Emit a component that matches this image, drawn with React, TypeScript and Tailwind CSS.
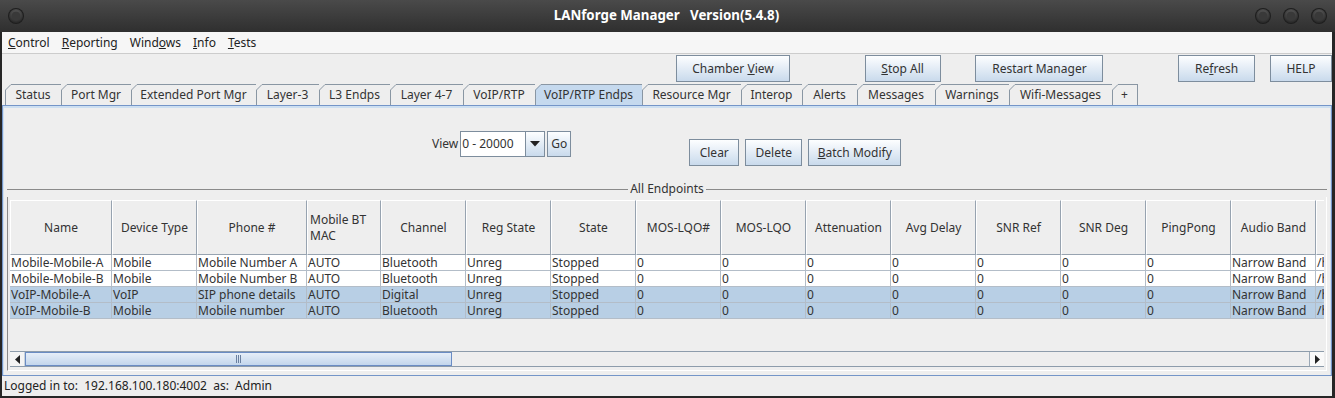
import React from "react";

const tabs = [
  { label: "Status", w: "w-[56px]" },
  { label: "Port Mgr", w: "w-[70px]" },
  { label: "Extended Port Mgr", w: "w-[125px]" },
  { label: "Layer-3", w: "w-[63px]" },
  { label: "L3 Endps", w: "w-[71px]" },
  { label: "Layer 4-7", w: "w-[73px]" },
  { label: "VoIP/RTP", w: "w-[72px]" },
  { label: "VoIP/RTP Endps", w: "w-[107px]", active: true },
  { label: "Resource Mgr", w: "w-[99px]" },
  { label: "Interop", w: "w-[61px]" },
  { label: "Alerts", w: "w-[55px]" },
  { label: "Messages", w: "w-[78px]" },
  { label: "Warnings", w: "w-[74px]" },
  { label: "Wifi-Messages", w: "w-[103px]" },
  { label: "+", w: "w-[26px]", last: true },
];

const columns = [
  { title: "Name", w: "w-[102px]" },
  { title: "Device Type", w: "w-[85px]" },
  { title: "Phone #", w: "w-[110px]" },
  { title: "Mobile BT MAC", w: "w-[74px]", twoLine: true },
  { title: "Channel", w: "w-[85px]" },
  { title: "Reg State", w: "w-[85px]" },
  { title: "State", w: "w-[85px]" },
  { title: "MOS-LQO#", w: "w-[85px]" },
  { title: "MOS-LQO", w: "w-[85px]" },
  { title: "Attenuation", w: "w-[85px]" },
  { title: "Avg Delay", w: "w-[85px]" },
  { title: "SNR Ref", w: "w-[85px]" },
  { title: "SNR Deg", w: "w-[85px]" },
  { title: "PingPong", w: "w-[85px]" },
  { title: "Audio Band", w: "w-[85px]" },
  { title: "", w: "w-[60px]" },
];

const rows = [
  { sel: false, cells: ["Mobile-Mobile-A", "Mobile", "Mobile Number A", "AUTO", "Bluetooth", "Unreg", "Stopped", "0", "0", "0", "0", "0", "0", "0", "Narrow Band", "/h"] },
  { sel: false, cells: ["Mobile-Mobile-B", "Mobile", "Mobile Number B", "AUTO", "Bluetooth", "Unreg", "Stopped", "0", "0", "0", "0", "0", "0", "0", "Narrow Band", "/h"] },
  { sel: true, cells: ["VoIP-Mobile-A", "VoIP", "SIP phone details", "AUTO", "Digital", "Unreg", "Stopped", "0", "0", "0", "0", "0", "0", "0", "Narrow Band", "/h"] },
  { sel: true, cells: ["VoIP-Mobile-B", "Mobile", "Mobile number", "AUTO", "Bluetooth", "Unreg", "Stopped", "0", "0", "0", "0", "0", "0", "0", "Narrow Band", "/h"] },
];

const WinDot = () => (
  <svg width="18" height="18" viewBox="0 0 18 18">
    <defs>
      <radialGradient id="dot" cx="50%" cy="35%" r="60%">
        <stop offset="0%" stopColor="#666" />
        <stop offset="100%" stopColor="#2a2a2a" />
      </radialGradient>
    </defs>
    <circle cx="9" cy="9" r="8" fill="#1e1e1e" />
    <circle cx="9" cy="9" r="7" fill="url(#dot)" />
    <circle cx="9" cy="9" r="4.5" fill="#393939" />
  </svg>
);

const Btn = ({ children, w, h = "h-[27px]" }: { children: React.ReactNode; w: string; h?: string }) => (
  <div
    className={`${w} ${h} shrink-0 flex items-center justify-center border border-[#7d8d9d] bg-gradient-to-b from-[#fdfeff] to-[#c9daec] text-[#333]`}
  >
    <span className="whitespace-pre">{children}</span>
  </div>
);

const Tab = ({ label, w, active, last }: { label: string; w: string; active?: boolean; last?: boolean }) => (
  <div className={`relative ${w} h-[21px] shrink-0 flex items-center justify-center ${last ? "border-r border-[#8996a3]" : ""}`}>
    {active && (
      <div className="absolute inset-0 bg-[#c5d9ee] [clip-path:polygon(6px_0,100%_0,100%_100%,0_100%,0_6px)]" />
    )}
    <div className="absolute left-[6px] right-0 top-0 h-px bg-[#8996a3]" />
    <svg className="absolute left-0 top-0" width="7" height="21" viewBox="0 0 7 21">
      <path d="M0.5 21 L0.5 6 L6 0.5" stroke="#8996a3" strokeWidth="1" fill="none" />
    </svg>
    <span className="relative pt-[1px]">{label}</span>
  </div>
);

export default function App() {
  return (
    <div className="w-[1335px] h-[398px] flex flex-col bg-[#262626] text-[12px] text-[#333] font-['Noto_Sans',sans-serif] overflow-hidden">
      {/* title bar */}
      <div className="h-[32px] shrink-0 flex items-center bg-gradient-to-b from-[#4a4a4a] to-[#2f2f2f] px-[7px]">
        <WinDot />
        <div className="flex-1 text-center text-white font-bold text-[13.3px] whitespace-pre pl-[54px]">
          LANforge Manager   Version(5.4.8)
        </div>
        <div className="flex gap-[10px]">
          <WinDot />
          <WinDot />
          <WinDot />
        </div>
      </div>

      <div className="flex-1 flex flex-col ml-[2px] mr-[3px] mb-[2px] bg-[#eeeeee]">
        {/* menu bar */}
        <div className="h-[22px] shrink-0 flex items-center gap-[12px] pl-[6px] bg-[#f6f6f6] border-b border-[#cccccc] text-[#222]">
          <span><u>C</u>ontrol</span>
          <span><u>R</u>eporting</span>
          <span>Wind<u>o</u>ws</span>
          <span><u>I</u>nfo</span>
          <span><u>T</u>ests</span>
        </div>

        {/* toolbar buttons */}
        <div className="h-[28px] shrink-0 flex items-end pl-[674px]">
          <Btn w="w-[114px]">Chamber <u>V</u>iew</Btn>
          <div className="w-[75px]" />
          <Btn w="w-[76px]"><u>S</u>top All</Btn>
          <div className="w-[35px]" />
          <Btn w="w-[128px]">Restart Manager</Btn>
          <div className="w-[75px]" />
          <Btn w="w-[77px]">Re<u>f</u>resh</Btn>
          <div className="w-[15px]" />
          <Btn w="w-[62px]">HELP</Btn>
        </div>

        {/* tabs */}
        <div className="h-[23px] shrink-0 flex items-end pl-[3px]">
          {tabs.map((t) => (
            <Tab key={t.label} label={t.label} w={t.w} active={t.active} last={t.last} />
          ))}
        </div>

        {/* tab content panel */}
        <div className="flex-1 flex flex-col border border-[#7495c8]">
          <div className="flex-1 flex flex-col border-t-[2px] border-x border-[#cddff1] pl-[3px] pr-[3px]">
            <div className="h-[73px] shrink-0 flex items-start pl-[425px]">
              <div className="mt-[23px] flex items-center">
                <span className="mr-[2px]">View</span>
                <div className="flex h-[26px] w-[85px] border border-[#7d8d9d] bg-white">
                  <div className="flex-1 flex items-center pl-[1px]">0 - 20000</div>
                  <div className="w-[19px] flex items-center justify-center border-l border-[#7d8d9d] bg-gradient-to-b from-[#fdfeff] to-[#c9daec]">
                    <svg width="10" height="6" viewBox="0 0 10 6">
                      <path d="M0 0 L10 0 L5 5.5 Z" fill="#222" />
                    </svg>
                  </div>
                </div>
                <div className="ml-[2px]">
                  <Btn w="w-[24px]" h="h-[26px]">Go</Btn>
                </div>
              </div>
              <div className="mt-[31px] ml-[118px] flex gap-[6px]">
                <Btn w="w-[50px]">Clear</Btn>
                <Btn w="w-[57px]">Delete</Btn>
                <Btn w="w-[93px]"><u>B</u>atch Modify</Btn>
              </div>
            </div>

            {/* titled border */}
            <div className="flex items-center h-[16px]">
              <div className="flex-1 h-px bg-[#8a8a8a]" />
              <span className="px-[2px] leading-[16px]">All Endpoints</span>
              <div className="flex-1 h-px bg-[#8a8a8a]" />
            </div>
            <div className="flex flex-col h-[174px] border-l border-[#8a8a8a] border-r border-b border-r-white border-b-white pl-[2px] pr-[2px] pt-[3px] pb-[3px]">
              <div className="flex-1 flex flex-col overflow-hidden">
                {/* header */}
                <div className="flex shrink-0">
                  {columns.map((c, i) => (
                    <div
                      key={i}
                      className={`${c.w} h-[55px] shrink-0 flex items-center ${c.twoLine ? "justify-start text-left pl-[2px] leading-[16px]" : "justify-center text-center"} border-t border-l border-t-white border-l-white border-r border-b border-r-[#97a3b0] border-b-[#97a3b0]`}
                    >
                      {c.twoLine ? (
                        <span>Mobile BT<br />MAC</span>
                      ) : (
                        c.title
                      )}
                    </div>
                  ))}
                </div>
                {/* rows */}
                {rows.map((r, i) => (
                  <div key={i} className={`flex shrink-0 ${r.sel ? "bg-[#b8cfe5]" : "bg-white"}`}>
                    {r.cells.map((v, j) => (
                      <div
                        key={j}
                        className={`${columns[j].w} h-[16px] shrink-0 overflow-hidden whitespace-nowrap leading-[15px] pl-[1px] border-r border-b border-[#b3bdc8]`}
                      >
                        {v}
                      </div>
                    ))}
                  </div>
                ))}
                <div className="flex-1" />
                {/* horizontal scrollbar */}
                <div className="h-[16px] shrink-0 flex border-y border-[#8d9cab] bg-[#eeeeee]">
                  <div className="w-[15px] flex items-center justify-center bg-[#f4f4f4] border-r border-[#c8d2dc]">
                    <svg width="5" height="9" viewBox="0 0 5 9">
                      <path d="M5 0 L5 9 L0 4.5 Z" fill="#222" />
                    </svg>
                  </div>
                  <div className="w-[427px] flex items-center justify-center border border-[#6a8cc4] bg-gradient-to-b from-[#e6eef8] to-[#c3d6ec]">
                    <svg width="6" height="8" viewBox="0 0 6 8">
                      <path d="M0.5 0 V8 M2.5 0 V8 M4.5 0 V8" stroke="#6a80a0" strokeWidth="1" />
                    </svg>
                  </div>
                  <div className="flex-1" />
                  <div className="w-[15px] flex items-center justify-center bg-[#f9f9f9] border-l border-[#9aa8b6]">
                    <svg width="5" height="9" viewBox="0 0 5 9">
                      <path d="M0 0 L0 9 L5 4.5 Z" fill="#222" />
                    </svg>
                  </div>
                </div>
              </div>
            </div>
            <div className="flex-1" />
          </div>
        </div>

        {/* status bar */}
        <div className="h-[20px] shrink-0 flex items-center pl-[2px] whitespace-pre text-[#222]">
          Logged in to:  192.168.100.180:4002  as:  Admin
        </div>
      </div>
    </div>
  );
}
